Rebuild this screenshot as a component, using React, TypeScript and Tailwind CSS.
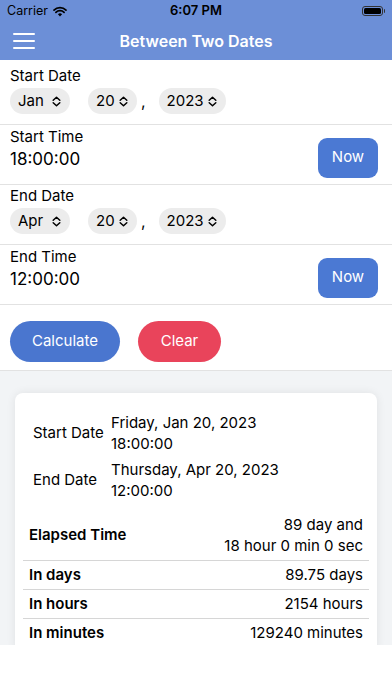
import React from 'react'

const UpDown = () => (
    <svg width="9" height="11" viewBox="0 0 9 11" fill="none">
        <path d="M1.2 4.2 L4.5 1.2 L7.8 4.2" stroke="black" strokeWidth="1.5" strokeLinecap="round" strokeLinejoin="round" />
        <path d="M1.2 6.8 L4.5 9.8 L7.8 6.8" stroke="black" strokeWidth="1.5" strokeLinecap="round" strokeLinejoin="round" />
    </svg>
)

const Picker = ({ value, width }: { value: string; width: string }) => (
    <div className={`flex items-center justify-between h-[26px] rounded-full bg-[#ececec] pl-[8px] pr-[9px] ${width}`}>
        <span className="text-[15px] text-black">{value}</span>
        <UpDown />
    </div>
)

const DateSection = ({ label, month, first }: { label: string; month: string; first?: boolean }) => (
    <div className={`flex flex-col px-[10px] pb-[10px] border-b border-[#e2e2e2] ${first ? 'pt-[6px]' : 'pt-[1px]'}`}>
        <div className="h-[20px] text-[15px] leading-[20px] text-black">{label}</div>
        <div className="flex items-center mt-[2px]">
            <Picker value={month} width="w-[60px]" />
            <div className="ml-[18px]">
                <Picker value="20" width="w-[49px]" />
            </div>
            <span className="ml-[4px] text-[16px] text-black">,</span>
            <div className="ml-[13px]">
                <Picker value="2023" width="w-[67px]" />
            </div>
        </div>
    </div>
)

const TimeSection = ({ label, value }: { label: string; value: string }) => (
    <div className="flex items-center justify-between px-[10px] h-[60px] border-b border-[#e2e2e2]">
        <div className="flex flex-col self-start pt-[2px]">
            <div className="h-[20px] text-[15px] leading-[20px] text-black">{label}</div>
            <div className="h-[22px] mt-[1px] text-[17px] leading-[22px] text-black">{value}</div>
        </div>
        <button className="mt-[6px] mr-[4px] w-[60px] h-[40px] rounded-[9px] bg-[#4b79d3] text-white text-[15px]">
            Now
        </button>
    </div>
)

const ResultRow = ({ label, value }: { label: string; value: string }) => (
    <div className="flex items-center justify-between h-[29px] px-[6px] border-t border-[#d6d6d6]">
        <span className="text-[15px] font-semibold text-black">{label}</span>
        <span className="text-[15px] text-black">{value}</span>
    </div>
)

export default function App() {
    return (
        <div className="w-[392px] h-[696px] overflow-hidden bg-white flex flex-col" style={{ fontFamily: 'Inter, "Noto Sans", sans-serif' }}>
            <div className="bg-[#6c8fd7] flex flex-col">
                <div className="relative flex items-center justify-between h-[22px] px-[7px]">
                    <div className="flex items-center gap-[5px]">
                        <span className="text-[12.5px] text-black">Carrier</span>
                        <svg width="14" height="11" viewBox="0 0 14 11">
                            <path d="M7 10.5 L4.9 8.3 A3 3 0 0 1 9.1 8.3 Z" fill="black" />
                            <path d="M2.9 6.3 A5.8 5.8 0 0 1 11.1 6.3" stroke="black" strokeWidth="1.7" fill="none" strokeLinecap="round" />
                            <path d="M1 4.1 A8.5 8.5 0 0 1 13 4.1" stroke="black" strokeWidth="1.7" fill="none" strokeLinecap="round" />
                        </svg>
                    </div>
                    <span className="absolute left-1/2 -translate-x-1/2 text-[13px] font-semibold text-black">6:07 PM</span>
                    <div className="flex items-center">
                        <div className="w-[21px] h-[10px] rounded-[3px] border border-[#333] p-[1px]">
                            <div className="w-full h-full rounded-[1.5px] bg-black" />
                        </div>
                        <div className="w-[1.5px] h-[4px] bg-[#333] rounded-r ml-[1px]" />
                    </div>
                </div>
                <div className="relative flex items-center justify-center h-[38px]">
                    <div className="absolute left-[13px] top-[11px] flex flex-col gap-[5px]">
                        <div className="w-[22px] h-[2px] bg-white rounded" />
                        <div className="w-[22px] h-[2px] bg-white rounded" />
                        <div className="w-[22px] h-[2px] bg-white rounded" />
                    </div>
                    <span className="text-[16px] font-semibold text-white">Between Two Dates</span>
                </div>
            </div>

            <DateSection label="Start Date" month="Jan" first />
            <TimeSection label="Start Time" value="18:00:00" />
            <DateSection label="End Date" month="Apr" />
            <TimeSection label="End Time" value="12:00:00" />

            <div className="flex items-center gap-[18px] px-[10px] pt-[16px] pb-[8px] border-b border-[#e2e2e2]">
                <button className="w-[110px] h-[41px] rounded-full bg-[#4a76cf] text-white text-[15px]">Calculate</button>
                <button className="w-[83px] h-[41px] rounded-full bg-[#e9445b] text-white text-[15px]">Clear</button>
            </div>

            <div className="h-[274px] overflow-hidden bg-[#f2f4f6] px-[15px] pt-[22px]">
                <div className="bg-white rounded-[8px] shadow-[0_0_10px_rgba(0,0,0,0.08)] px-[8px] pt-[19px] pb-[6px]">
                    <div className="flex flex-col gap-[5px] px-[10px]">
                        <div className="flex items-center">
                            <span className="w-[78px] text-[15px] text-black">Start Date</span>
                            <div className="flex flex-col text-[15px] leading-[21px] text-black">
                                <span>Friday, Jan 20, 2023</span>
                                <span>18:00:00</span>
                            </div>
                        </div>
                        <div className="flex items-center">
                            <span className="w-[78px] text-[15px] text-black">End Date</span>
                            <div className="flex flex-col text-[15px] leading-[21px] text-black">
                                <span>Thursday, Apr 20, 2023</span>
                                <span>12:00:00</span>
                            </div>
                        </div>
                    </div>
                    <div className="flex items-center justify-between px-[6px] mt-[13px] pb-[4px]">
                        <span className="text-[15px] font-semibold text-black">Elapsed Time</span>
                        <div className="flex flex-col items-end text-[15px] leading-[21px] text-black">
                            <span>89 day and</span>
                            <span>18 hour 0 min 0 sec</span>
                        </div>
                    </div>
                    <ResultRow label="In days" value="89.75 days" />
                    <ResultRow label="In hours" value="2154 hours" />
                    <ResultRow label="In minutes" value="129240 minutes" />
                </div>
            </div>
            <div className="flex-1 bg-white" />
        </div>
    )
}
